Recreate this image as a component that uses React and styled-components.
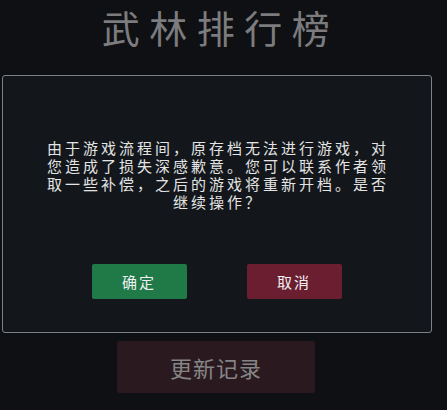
import styled, { createGlobalStyle } from 'styled-components';

const GlobalStyle = createGlobalStyle`
  html, body {
    margin: 0;
    padding: 0;
    background: #0f1013;
  }
  body {
    font-family: "Noto Sans CJK SC", "Noto Sans", sans-serif;
  }
`;

const Page = styled.div`
  width: 432px;
  height: 410px;
  display: flex;
  flex-direction: column;
  align-items: center;
  overflow: hidden;
`;

const Title = styled.h1`
  margin: 0;
  height: 75px;
  padding-top: 4px;
  box-sizing: border-box;
  font-size: 38px;
  line-height: 46px;
  font-weight: 400;
  letter-spacing: 9.5px;
  padding-left: 9px;
  color: #7c7c7e;
`;

const Dialog = styled.div`
  width: 430px;
  height: 258px;
  box-sizing: border-box;
  margin-left: 1px;
  border: 1px solid #7d8187;
  border-radius: 3px;
  background: #13171b;
  display: flex;
  flex-direction: column;
  align-items: center;
  padding-top: 63px;
`;

const Message = styled.p`
  margin: 0;
  width: 350px;
  text-align: center;
  font-size: 15px;
  line-height: 18px;
  letter-spacing: 3px;
  padding-left: 3px;
  color: #e4e4e4;
`;

const Actions = styled.div`
  display: flex;
  justify-content: center;
  gap: 60px;
  margin-top: auto;
  margin-bottom: 33px;
`;

const ActionButton = styled.button`
  width: 95px;
  height: 35px;
  border: none;
  border-radius: 2px;
  background: ${(p) => p.$bg};
  color: #f0f0f0;
  font-family: inherit;
  font-size: 15px;
  letter-spacing: 2px;
  cursor: pointer;
`;

const UpdateButton = styled.button`
  margin-top: 8px;
  width: 198px;
  height: 52px;
  border: none;
  border-radius: 2px;
  background: #2a1a1f;
  color: #858587;
  font-family: inherit;
  font-size: 22px;
  letter-spacing: 1px;
`;

export default function App() {
  return (
    <Page>
      <GlobalStyle />
      <Title>武林排行榜</Title>
      <Dialog>
        <Message>
          由于游戏流程间，原存档无法进行游戏，对您造成了损失深感歉意。您可以联系作者领取一些补偿，之后的游戏将重新开档。是否继续操作？
        </Message>
        <Actions>
          <ActionButton $bg="#1f7a48">确定</ActionButton>
          <ActionButton $bg="#6a1e30">取消</ActionButton>
        </Actions>
      </Dialog>
      <UpdateButton>更新记录</UpdateButton>
    </Page>
  );
}
